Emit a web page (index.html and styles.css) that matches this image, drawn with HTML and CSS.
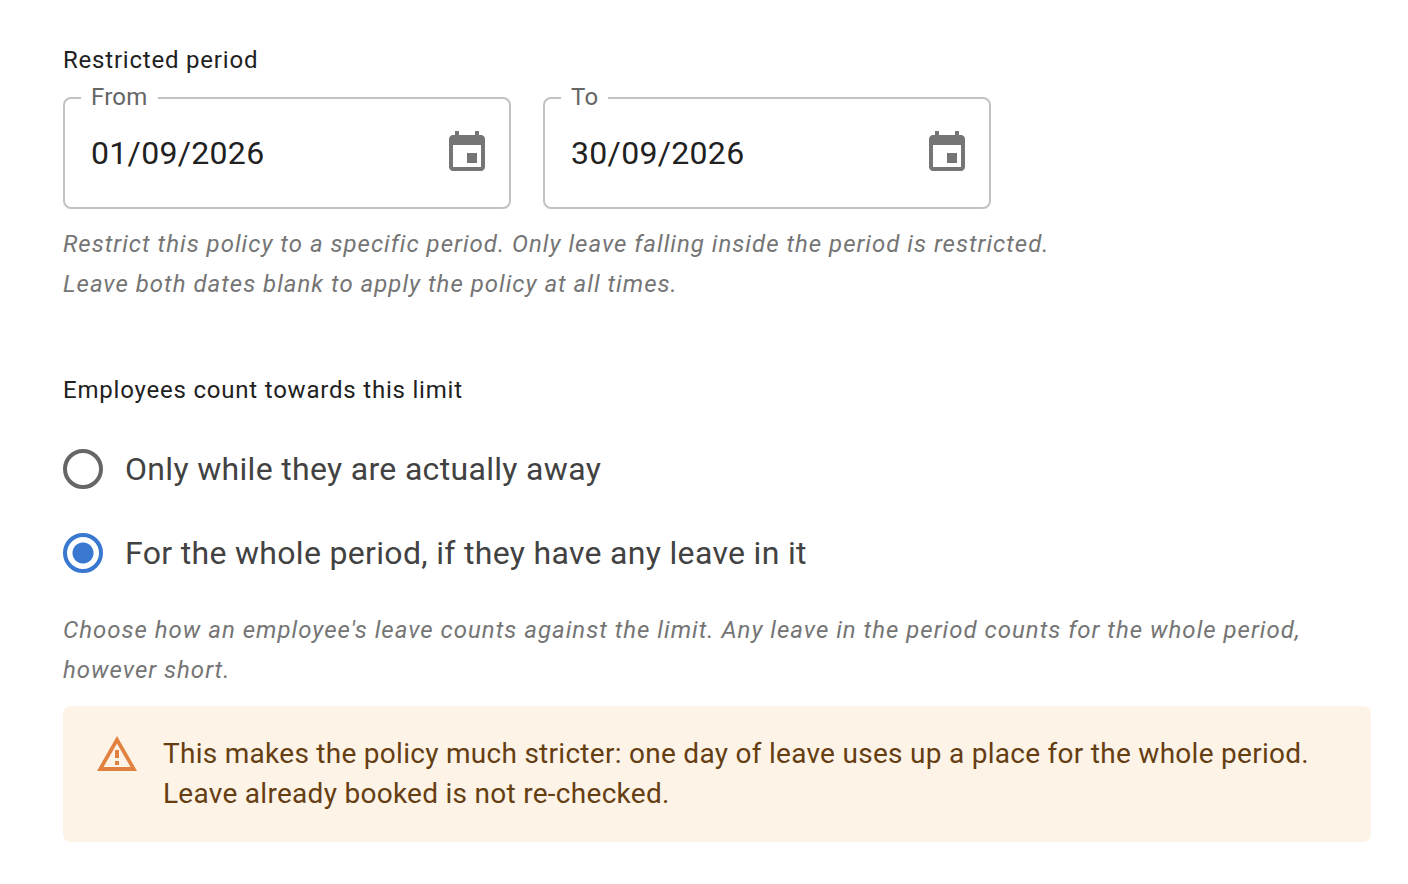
FILE: index.html
```html
<!DOCTYPE html>
<html lang="en">
<head>
<meta charset="utf-8">
<title>Leave policy</title>
<link rel="stylesheet" href="styles.css">
</head>
<body>
<form class="policy">
  <section class="group" aria-labelledby="period-title">
    <h2 class="title" id="period-title">Restricted period</h2>
    <div class="dates">
      <fieldset class="field">
        <legend class="field-legend"><label for="from">From</label></legend>
        <div class="field-row">
          <input class="field-input" id="from" type="text" value="01/09/2026">
          <button class="picker" type="button" aria-label="Choose start date">
            <svg class="picker-icon" viewBox="0 0 24 24"><path d="M17 12h-5v5h5v-5zM16 1v2H8V1H6v2H5c-1.11 0-1.99.9-1.99 2L3 19c0 1.1.89 2 2 2h14c1.1 0 2-.9 2-2V5c0-1.1-.9-2-2-2h-1V1h-2zm3 18H5V8h14v11z"/></svg>
          </button>
        </div>
      </fieldset>
      <fieldset class="field">
        <legend class="field-legend"><label for="to">To</label></legend>
        <div class="field-row">
          <input class="field-input" id="to" type="text" value="30/09/2026">
          <button class="picker" type="button" aria-label="Choose end date">
            <svg class="picker-icon" viewBox="0 0 24 24"><path d="M17 12h-5v5h5v-5zM16 1v2H8V1H6v2H5c-1.11 0-1.99.9-1.99 2L3 19c0 1.1.89 2 2 2h14c1.1 0 2-.9 2-2V5c0-1.1-.9-2-2-2h-1V1h-2zm3 18H5V8h14v11z"/></svg>
          </button>
        </div>
      </fieldset>
    </div>
    <p class="hint">Restrict this policy to a specific period. Only leave falling inside the period is restricted.<br>Leave both dates blank to apply the policy at all times.</p>
  </section>
  <section class="group" aria-labelledby="count-title">
    <h2 class="title" id="count-title">Employees count towards this limit</h2>
    <div class="options" role="radiogroup" aria-labelledby="count-title">
      <label class="option"><input class="radio" type="radio" name="count">Only while they are actually away</label>
      <label class="option"><input class="radio" type="radio" name="count" checked>For the whole period, if they have any leave in it</label>
    </div>
    <p class="hint">Choose how an employee's leave counts against the limit. Any leave in the period counts for the whole period, however short.</p>
    <div class="notice">
      <svg class="notice-icon" viewBox="0 0 44 44"><path fill-rule="evenodd" d="M22 2 42 37H2zM22 9.500 8.500 33H35.500zM20 16h4v8h-4zM20 27h4v4h-4z"/></svg>
      <p class="notice-text">This makes the policy much stricter: one day of leave uses up a place for the whole period. Leave already booked is not re-checked.</p>
    </div>
  </section>
</form>
</body>
</html>
```
FILE: styles.css
```css
* { box-sizing: border-box; }
body { margin: 0; background: #fff; font-family: Roboto, "Liberation Sans", sans-serif; letter-spacing: 0.01em; }
.policy { display: flex; flex-direction: column; gap: 66px; padding: 40px 37px 42px 63px; }
.title { margin: 0; font-size: 24px; line-height: 40px; font-weight: 400; letter-spacing: 0.033em; color: #212121; }
.dates { display: flex; gap: 32px; }
.field { flex: 0 1 448px; min-width: 0; margin: 0; padding: 0 18px; border: 2px solid #c2c2c2; border-radius: 8px; }
.field-legend { padding: 0 10px 2px; margin-left: -2px; font-size: 24px; line-height: 34px; letter-spacing: 0.01em; color: #666; }
.field-row { display: flex; align-items: center; height: 91px; padding: 0 0 17px 8px; }
.field-input { flex: 1; min-width: 0; padding: 0; border: 0; outline: 0; background: none; font: 400 32px/40px Roboto, "Liberation Sans", sans-serif; letter-spacing: 0.01em; color: #212121; }
.picker { display: flex; padding: 0; border: 0; background: none; }
.picker-icon { width: 48px; height: 48px; fill: #757575; }
.hint { margin: 15px 0 0; font-size: 24px; line-height: 40px; font-style: italic; letter-spacing: 1px; color: #757575; }
.options { display: flex; flex-direction: column; margin-top: 17px; }
.option { display: flex; align-items: center; gap: 22px; min-height: 84px; font-size: 32px; line-height: 40px; letter-spacing: 0.01em; color: #424242; }
.radio { appearance: none; flex: none; width: 40px; height: 40px; margin: 0; border: 4px solid #666; border-radius: 50%; }
.radio:checked { border-color: #3878d0; background: radial-gradient(circle, #3878d0 10px, transparent 11px); }
.notice { display: flex; gap: 24px; margin-top: 16px; padding: 28px 32px; border-radius: 8px; background: #fdf3e7; }
.notice-icon { flex: none; width: 44px; height: 44px; fill: #e2813f; }
.notice-text { margin: 0; font-size: 28px; line-height: 40px; letter-spacing: 0.01em; color: #653e12; }
```
